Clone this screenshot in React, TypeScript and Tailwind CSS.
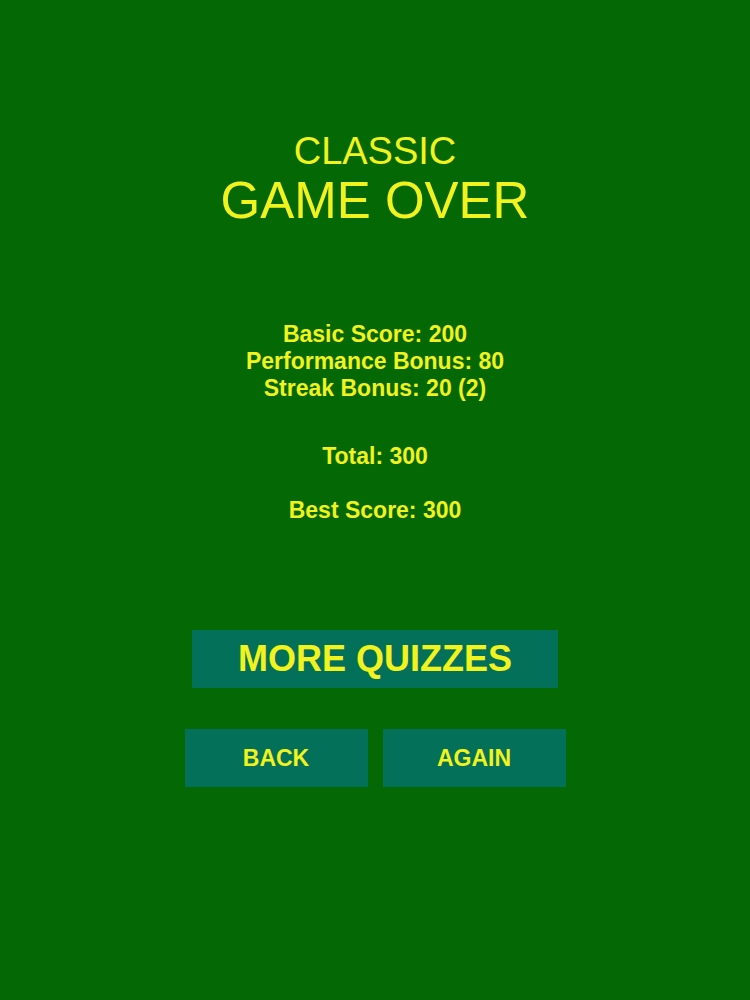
import React from "react";

export default function App() {
  return (
    <div
      className="w-[750px] h-[1000px] bg-[#046904] flex flex-col items-center text-[#f2f21c]"
      style={{ fontFamily: '"Liberation Sans", Arial, sans-serif' }}
    >
      <div className="pt-[132px] text-[38px] leading-none">CLASSIC</div>
      <div className="mt-[5px] text-[51px] leading-none">GAME OVER</div>

      <div className="mt-[95px] flex flex-col items-center font-bold text-[23px] leading-[27px]">
        <div>Basic Score: 200</div>
        <div>Performance Bonus: 80</div>
        <div>Streak Bonus: 20 (2)</div>
      </div>

      <div className="mt-[41px] font-bold text-[23px] leading-[27px]">Total: 300</div>
      <div className="mt-[27px] font-bold text-[23px] leading-[27px]">Best Score: 300</div>

      <button className="mt-[106px] w-[366px] h-[58px] bg-[#03705a] flex items-center justify-center font-bold text-[36px] leading-none text-[#f2f21c]">
        MORE QUIZZES
      </button>

      <div className="mt-[41px] flex gap-[15px]">
        <button className="w-[183px] h-[58px] bg-[#03705a] flex items-center justify-center font-bold text-[23px] leading-none text-[#f2f21c]">
          BACK
        </button>
        <button className="w-[183px] h-[58px] bg-[#03705a] flex items-center justify-center font-bold text-[23px] leading-none text-[#f2f21c]">
          AGAIN
        </button>
      </div>
    </div>
  );
}
